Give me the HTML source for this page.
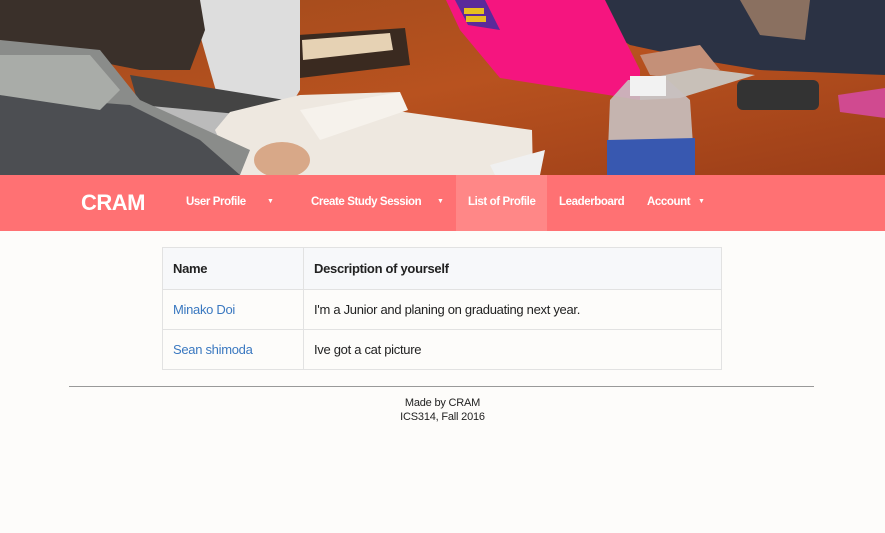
<!DOCTYPE html>
<html><head><meta charset="utf-8"><style>
*{margin:0;padding:0;box-sizing:border-box}
body{width:885px;height:533px;background:#fdfcfa;font-family:"Liberation Sans",sans-serif;overflow:hidden;position:relative}
.photo{position:absolute;left:0;top:0;width:885px;height:175px}
nav{position:absolute;top:175px;left:0;width:885px;height:56px;background:#ff7173;color:#fff;font-size:11.5px;letter-spacing:-0.4px}
nav span{position:absolute;top:21px;font-weight:bold}
.brand{left:81px;top:15px!important;font-size:22px;letter-spacing:-0.5px}
.active{position:absolute;left:456px;top:0;width:91px;height:56px;background:#ff8787}
.car{font-size:7px!important;top:23px!important}
table{position:absolute;left:162px;top:247px;width:560px;border-collapse:collapse;font-size:13px;letter-spacing:-0.3px;color:#222;border:1px solid #ddd}
td,th{border:1px solid #e2e2e2;padding:0 10px;text-align:left;height:40px}
th{background:#f7f8fa;height:42px;font-weight:bold}
td.n{width:141px;color:#3a78c0}
hr{position:absolute;left:69px;top:386px;width:745px;border:0;border-top:1px solid #999}
.foot{position:absolute;left:0;width:885px;top:396px;text-align:center;font-size:11px;letter-spacing:-0.2px;line-height:14px;color:#222}
</style></head><body>
<svg class="photo" viewBox="0 0 885 175" width="885" height="175">
<defs><linearGradient id="w" x1="0" y1="0" x2="1" y2="1"><stop offset="0" stop-color="#a04a1c"/><stop offset=".5" stop-color="#b8521f"/><stop offset="1" stop-color="#9c3e18"/></linearGradient></defs>
<rect width="885" height="175" fill="url(#w)"/>
<polygon points="585,0 885,0 885,75 760,70 700,60 630,45 590,20" fill="#2b3244"/>
<polygon points="740,0 810,0 805,40 760,35" fill="#8a7060"/>
<polygon points="640,55 700,45 720,70 680,80 650,75" fill="#c49078"/>
<polygon points="446,0 605,0 640,70 640,100 500,78 460,30" fill="#f5157f"/>
<polygon points="455,0 485,0 500,30 468,25" fill="#5a2a9a"/>
<rect x="464" y="8" width="20" height="6" fill="#e6c020"/><rect x="466" y="16" width="20" height="6" fill="#e6c020"/>
<polygon points="640,80 700,68 755,75 680,98 640,100" fill="#c8c0b8"/>
<rect x="737" y="80" width="82" height="30" rx="6" fill="#333"/>
<polygon points="838,95 885,88 885,118 840,112" fill="#d04a90"/>
<polygon points="298,35 405,28 410,65 300,78" fill="#3a2a20"/>
<polygon points="302,40 390,33 393,50 303,60" fill="#e6d2b4"/>
<polygon points="190,0 300,0 300,90 285,115 220,105" fill="#ddd"/>
<polygon points="130,75 285,100 280,118 220,125 140,110" fill="#444"/>
<polygon points="140,105 280,118 265,140 220,150 150,120" fill="#bbb"/>
<polygon points="215,130 230,112 300,95 400,92 390,110 532,130 533,175 235,175" fill="#eee8e0"/>
<polygon points="300,110 400,92 408,110 320,140" fill="#f6f2ec"/>
<polygon points="0,0 200,0 205,30 190,70 140,70 40,50 0,40" fill="#3a302a"/>
<polygon points="0,40 100,50 140,100 250,150 240,175 0,175" fill="#8a8c8a"/>
<polygon points="0,95 130,105 200,140 240,175 0,175" fill="#4c4e52"/>
<polygon points="0,55 90,55 120,90 100,110 0,95" fill="#a9aca8"/>
<ellipse cx="282" cy="160" rx="28" ry="18" fill="#d8a888"/>
<polygon points="610,100 628,80 668,80 690,100 695,175 607,175" fill="#c8c0c0" opacity=".9"/>
<rect x="630" y="76" width="36" height="20" fill="#f2f2f2"/>
<polygon points="607,140 695,138 695,175 607,175" fill="#3858b0"/>
<polygon points="490,165 545,150 540,175 495,175" fill="#f0f0f0"/>
</svg>
<nav>
<div class="active"></div>
<span class="brand">CRAM</span>
<span style="left:186px">User Profile</span><span class="car" style="left:267px">▼</span>
<span style="left:311px">Create Study Session</span><span class="car" style="left:437px">▼</span>
<span style="left:468px">List of Profile</span>
<span style="left:559px">Leaderboard</span>
<span style="left:647px">Account</span><span class="car" style="left:698px">▼</span>
</nav>
<table>
<tr><th style="width:141px">Name</th><th>Description of yourself</th></tr>
<tr><td class="n">Minako Doi</td><td>I'm a Junior and planing on graduating next year.</td></tr>
<tr><td class="n">Sean shimoda</td><td>Ive got a cat picture</td></tr>
</table>
<hr>
<div class="foot">Made by CRAM<br>ICS314, Fall 2016</div>
</body></html>
